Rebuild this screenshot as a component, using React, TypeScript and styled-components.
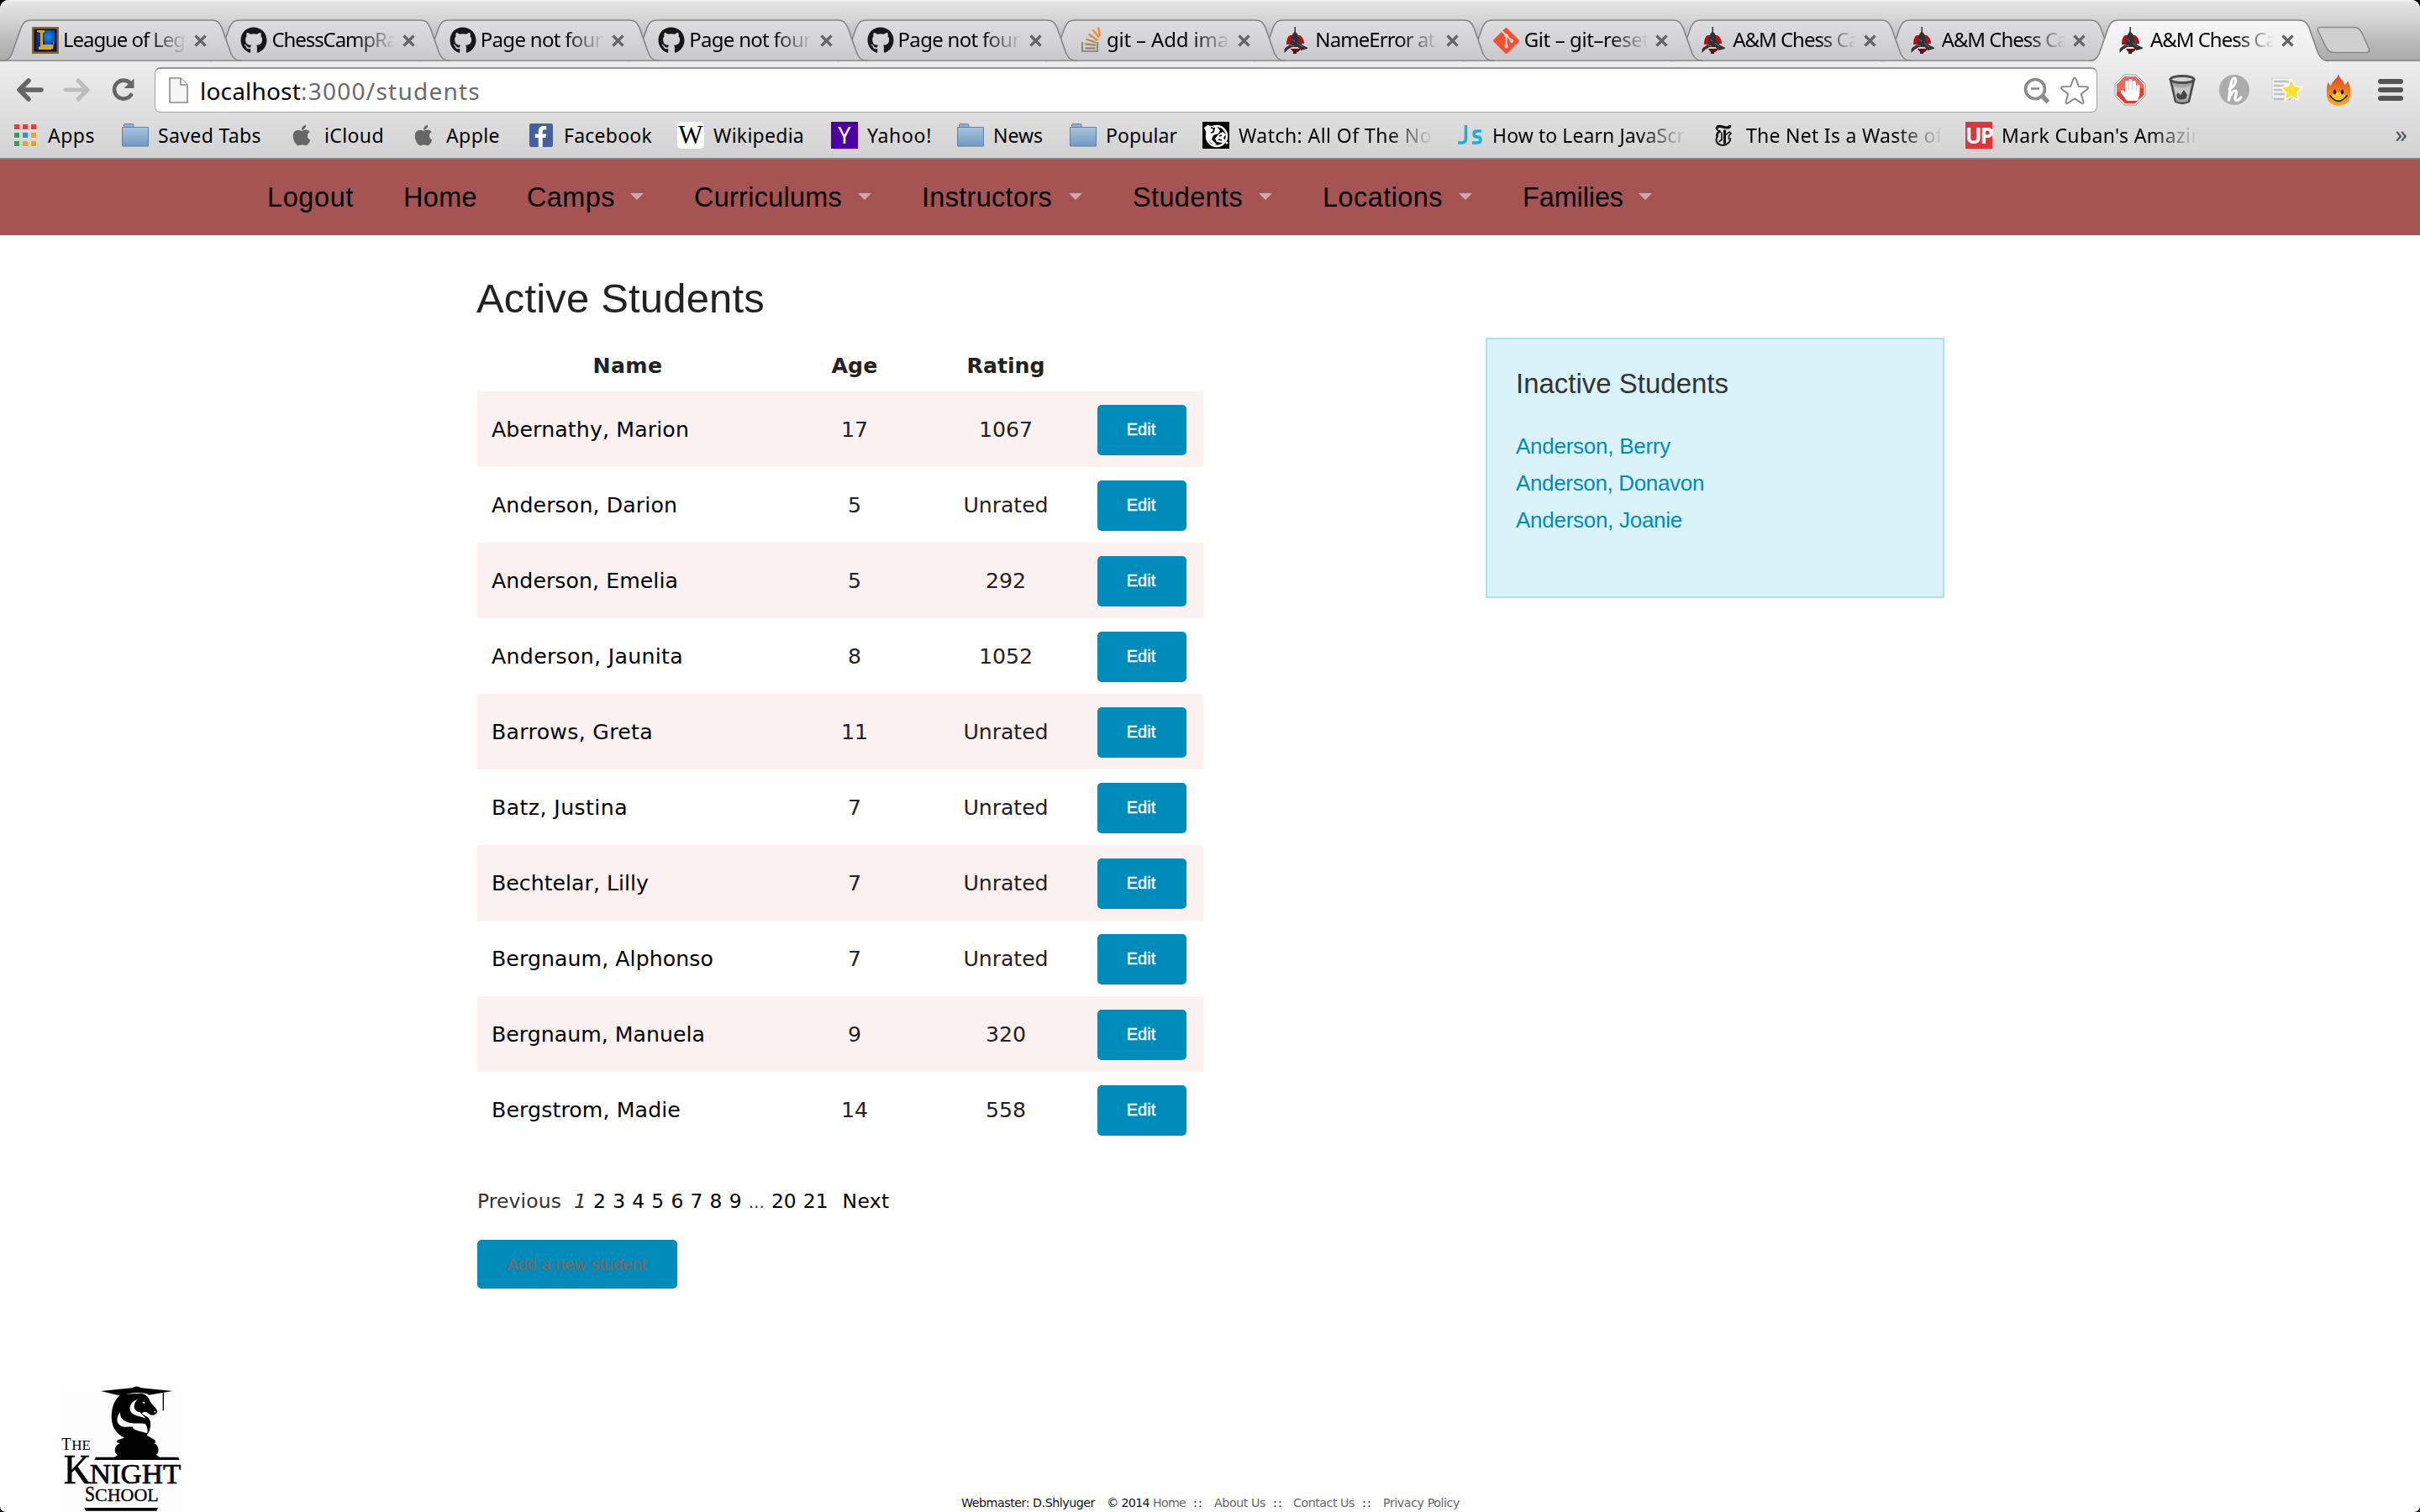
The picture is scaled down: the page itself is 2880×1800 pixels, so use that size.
import React, { useLayoutEffect, useRef, useState } from "react";
import styled, { createGlobalStyle } from "styled-components";
import { FaApple, FaFacebookF, FaGithub, FaGitAlt, FaHandPaper } from "react-icons/fa";

const chromeFont = `"Lucida Grande", "Noto Sans", sans-serif`;
const verdana = `"DejaVu Sans", Verdana, sans-serif`;
const helvetica = `"Liberation Sans", Helvetica, Arial, sans-serif`;

const GlobalStyle = createGlobalStyle`
  * { box-sizing: border-box; }
  html, body { margin: 0; padding: 0; background: #000; }
  a { color: inherit; text-decoration: none; }
  svg { display: block; flex: none; }
`;

const Window = styled.div`
  width: 2880px;
  height: 1800px;
  display: flex;
  flex-direction: column;
  overflow: hidden;
  background: #fff;
  border-radius: 10px 10px 7px 7px;
  font-family: ${verdana};
`;

/* ---------- text tracked to a set measure ---------- */

const Tracked = styled.span`
  display: inline-block;
  white-space: pre;
  flex: none;
`;

function Track({ children, width }: { children: string; width: number }) {
  const ref = useRef<HTMLSpanElement>(null);
  const [spacing, setSpacing] = useState(0);
  useLayoutEffect(() => {
    const el = ref.current;
    if (!el) return;
    el.style.letterSpacing = "0px";
    const natural = el.getBoundingClientRect().width;
    const next = (width - natural) / children.length;
    el.style.letterSpacing = `${next}px`;
    setSpacing(next);
  }, [children, width]);
  return (
    <Tracked ref={ref} style={{ letterSpacing: spacing }}>
      {children}
    </Tracked>
  );
}

/* ---------- tab strip ---------- */

const TabStrip = styled.div`
  height: 73px;
  flex: none;
  display: flex;
  align-items: flex-end;
  padding-left: 8px;
  background: linear-gradient(#f4f4f4 0, #e4e4e4 3px, #d2d2d2 26px, #b9b9b9 50px, #ababab 100%);
  box-shadow: inset 0 -2px 0 #8d8d8d;
`;

const TabBox = styled.div<{ $order: number }>`
  position: relative;
  z-index: ${(p) => p.$order};
  width: 248.4px;
  height: 50px;
  flex: none;
  display: flex;
  align-items: center;
  padding: 0 0 0 30px;
`;

const TabShape = styled.svg`
  position: absolute;
  left: -6px;
  top: 0;
  z-index: -1;
`;

const TabTitle = styled.div`
  width: 146px;
  height: 34px;
  margin: -3px 0 0 5px;
  overflow: hidden;
  font: 24px/34px ${chromeFont};
  color: #000;
  -webkit-mask-image: linear-gradient(90deg, #000 68%, transparent 101%);
  mask-image: linear-gradient(90deg, #000 68%, transparent 101%);
`;

const CloseMark = styled.svg`
  margin-left: 10px;
`;

const NewTab = styled.svg`
  margin: 0 0 8px 17px;
`;

/* ---------- toolbar ---------- */

const ChromeBody = styled.div`
  height: 117px;
  flex: none;
  display: flex;
  flex-direction: column;
  background: linear-gradient(#ededed, #e0e0e0 50%, #d2d2d2);
  border-bottom: 2px solid #808080;
`;

const Toolbar = styled.div`
  height: 68px;
  display: flex;
  align-items: center;
  padding-left: 19px;
`;

const NavButtons = styled.div`
  width: 165px;
  display: flex;
  align-items: center;
  gap: 23px;
`;

const AddressField = styled.div`
  width: 2312px;
  height: 54px;
  display: flex;
  align-items: center;
  padding: 0 8px 0 16px;
  background: #fff;
  border: 1px solid #a2a2a2;
  border-top: 2px solid #949494;
  border-radius: 7px;
`;

const Url = styled.div`
  flex: 1;
  margin-left: 14px;
  font: 28px/40px ${chromeFont};
  color: #6a6a6a;
`;

const Host = styled.span`
  color: #000;
`;

const FieldIcons = styled.div`
  display: flex;
  align-items: center;
  gap: 11px;
`;

const Extensions = styled.div`
  margin-left: 8px;
  display: grid;
  grid-template-columns: repeat(6, 62px);
  align-items: center;
  justify-items: center;
`;

/* ---------- bookmarks ---------- */

const BookmarkBar = styled.div`
  height: 40px;
  display: flex;
  align-items: center;
  padding-left: 14px;
`;

const BookmarkItem = styled.div<{ $width: number }>`
  width: ${(p) => p.$width}px;
  flex: none;
  display: flex;
  align-items: center;
`;

const IconSlot = styled.span`
  width: 32px;
  height: 34px;
  flex: none;
  display: flex;
  align-items: center;
  justify-content: center;
`;

const BookmarkText = styled.span<{ $fade?: boolean }>`
  margin-left: 11px;
  font: 23px/34px ${chromeFont};
  color: #000;
  overflow: hidden;
  ${(p) =>
    p.$fade &&
    `max-width: 232px;
     -webkit-mask-image: linear-gradient(90deg, #000 76%, transparent 101%);
     mask-image: linear-gradient(90deg, #000 76%, transparent 101%);`}
`;

const Glyph = styled.span<{ $bg: string; $color: string; $size: number; $family: string; $radius?: number; $bold?: boolean }>`
  width: 32px;
  height: 32px;
  display: flex;
  align-items: center;
  justify-content: center;
  border-radius: ${(p) => p.$radius ?? 0}px;
  background: ${(p) => p.$bg};
  color: ${(p) => p.$color};
  font: ${(p) => (p.$bold ? 700 : 400)} ${(p) => p.$size}px/32px ${(p) => p.$family};
  letter-spacing: ${(p) => (p.$bold ? "-2px" : "0")};
`;

const FacebookTile = styled.span`
  width: 28px;
  height: 28px;
  display: flex;
  align-items: flex-end;
  justify-content: flex-end;
  padding-right: 2px;
  background: #45619d;
  color: #fff;
  border-radius: 2px;
`;

const AppsGrid = styled.span`
  display: grid;
  grid-template-columns: repeat(3, 6px);
  gap: 4px;
`;

const AppsDot = styled.span<{ $color: string }>`
  height: 6px;
  background: ${(p) => p.$color};
  box-shadow: 0 1px 0 #fff8;
`;

const More = styled.span`
  margin-left: auto;
  padding: 0 15px 5px 0;
  font: 29px/30px ${chromeFont};
  color: #555;
`;

/* ---------- page ---------- */

const SiteNav = styled.nav`
  height: 90px;
  flex: none;
  display: flex;
  align-items: center;
  padding-left: 318px;
  background: #a55353;
  color: #000;
  font: 32.4px/45px ${helvetica};
`;

const NavItem = styled.a<{ $width: number }>`
  width: ${(p) => p.$width}px;
  flex: none;
  display: flex;
  align-items: center;
  justify-content: space-between;
  padding-right: 60px;
`;

const Caret = styled.span`
  margin-bottom: 2px;
  border: 8px solid transparent;
  border-top-color: #d2a9a9;
  border-bottom: 0;
`;

const Main = styled.main`
  flex: 1;
  display: flex;
  align-items: flex-start;
  padding: 40px 0 0 568px;
`;

const Roster = styled.section`
  width: 864px;
`;

const Title = styled.h2`
  height: 70px;
  margin: 0 0 14px -1px;
  font: 400 49px/70px ${helvetica};
  color: #222;
`;

const Grid = styled.div`
  display: flex;
  flex-direction: column;
  font-size: 25.2px;
  color: #222;
`;

const Row = styled.div<{ $shaded?: boolean; $head?: boolean }>`
  height: ${(p) => (p.$head ? 62 : 90)}px;
  display: grid;
  grid-template-columns: 358px 182px 178px 1fr;
  align-items: center;
  text-align: center;
  font-weight: ${(p) => (p.$head ? 700 : 400)};
  background: ${(p) => (p.$shaded ? "#faf1f0" : "#fff")};
`;

const NameCell = styled.a`
  padding-left: 17px;
  text-align: left;
  color: #000;
`;

const Button = styled.button<{ $wide?: boolean }>`
  width: ${(p) => (p.$wide ? 238 : 106)}px;
  height: ${(p) => (p.$wide ? 58 : 60)}px;
  margin: ${(p) => (p.$wide ? "26px 0 0" : "2px 0 0 20px")};
  padding: ${(p) => (p.$wide ? "0 2px 0 0" : "0 2px 2px 0")};
  border: 0;
  border-radius: 5px;
  background: #008cba;
  color: ${(p) => (p.$wide ? "#716b6c" : "#fff")};
  font: 20px/28px ${helvetica};
  -webkit-text-stroke: ${(p) => (p.$wide ? "0.4px #716b6c" : "0.4px #fff")};
`;

const Pager = styled.div`
  height: 40px;
  margin-top: 44px;
  display: flex;
  align-items: center;
  font-size: 23.4px;
  line-height: 40px;
  color: #333;
`;

const PageList = styled.span`
  margin: 0 17px 0 15px;
  display: flex;
  gap: 8.2px;
  color: #000;
`;

const Current = styled.em`
  color: #333;
`;

const Dots = styled.span`
  display: inline-block;
  font-size: 19px;
  color: #333;
`;

const Panel = styled.aside`
  width: 546px;
  height: 310px;
  margin: 82px 0 0 336px;
  padding: 31px 34px;
  background: #daf2fa;
  border: 2px solid #a9e3f2;
  font-family: ${helvetica};
  color: #008cba;
  font-size: 26px;
  line-height: 44px;
  display: flex;
  flex-direction: column;
  align-items: flex-start;
`;

const PanelTitle = styled.h5`
  margin: 0 0 30px;
  font: 400 33px/44px ${helvetica};
  color: #333;
`;

const Footer = styled.footer`
  height: 150px;
  flex: none;
  display: flex;
  align-items: flex-end;
  padding-left: 72px;
`;

const FooterText = styled.div`
  margin-left: 928px;
  height: 23px;
  display: flex;
  font-size: 14.2px;
  line-height: 24px;
  color: #000;
`;

const FootPart = styled.span<{ $gap: number; $muted?: boolean }>`
  margin-right: ${(p) => p.$gap}px;
  color: ${(p) => (p.$muted ? "#666" : "#111")};
`;

/* ---------- icons ---------- */

const LeagueIcon = () => (
  <svg width="32" height="32" viewBox="0 0 32 32">
    <defs>
      <radialGradient id="lol" cx=".65" cy=".35" r=".6">
        <stop offset="0" stopColor="#1a8be6" />
        <stop offset="1" stopColor="#062a8c" />
      </radialGradient>
    </defs>
    <rect width="32" height="32" fill="#8a6326" />
    <rect x="2.5" y="2.5" width="27" height="27" fill="#071238" />
    <rect x="5" y="4" width="22" height="23" fill="url(#lol)" />
    <path d="M6 4h9v2l-2 1v14h9l4-4-1 9-3 1H8v-3l2-1V7L6 6z" fill="#d9a531" />
    <path d="M13 7v14h9l3-3v3H15z" fill="#06104a" />
  </svg>
);

const OverflowIcon = () => (
  <svg width="32" height="32" viewBox="0 0 32 32" fill="none">
    <path d="M8 18v11h18V18" stroke="#8b8c8e" strokeWidth="2.2" />
    <path d="M11.500 25.500h12" stroke="#8f8878" strokeWidth="2.400" />
    <path d="M11.500 20.300l12.500 1.600" stroke="#a48a60" strokeWidth="2.400" />
    <path d="M12.500 14.600l12 4" stroke="#b98f4e" strokeWidth="2.400" />
    <path d="M15.500 8.500l10.500 7.500" stroke="#cf9440" strokeWidth="2.400" />
    <path d="M20.500 3.500l7.500 9" stroke="#ee8f3d" strokeWidth="2.600" />
    <path d="M27 .5l2 10.500" stroke="#f98b3a" strokeWidth="2.600" />
  </svg>
);

const KnightFavicon = () => (
  <svg width="32" height="32" viewBox="0 0 32 32">
    <path d="M12.500 0h1.500v8l3 3h-8l3.500-3z" fill="#333" />
    <path d="M7 10h4l2 3v8H3c0-5 1-9 4-11z" fill="#b11218" />
    <path d="M16 10h3c3 2 5 5 5 10h-9v-8z" fill="#b11218" />
    <path d="M10 9l3-4 3.500 4 1 8 5 5 6 3-1 1-7 2-4-4h-7l-5 3-4 4v-4l1-2 6-4z" fill="#303236" />
    <path d="M8 26h12l-2 3-4 2-4-2z" fill="#7c0b10" />
    <path d="M6 21l6 2M16 19l6 5M10 15l3 2" stroke="#777" strokeWidth="1" />
    <path d="M11 28h4v4h-4z" fill="#3a2024" />
  </svg>
);

const Arrow = ({ muted, flip }: { muted?: boolean; flip?: boolean }) => (
  <svg width="33" height="30" viewBox="0 0 33 30" fill="none" transform={flip ? "scale(-1 1)" : undefined}>
    <path d="M15 4L4 15l11 11M5 15h25" stroke={muted ? "#bdbdbd" : "#656565"} strokeWidth={muted ? 5 : 5.500} strokeLinecap="round" strokeLinejoin="round" />
  </svg>
);

const Reload = () => (
  <svg width="30" height="30" viewBox="0 0 30 30">
    <path d="M24 7A11 11 0 1 0 25 21" fill="none" stroke="#656565" strokeWidth="4.600" strokeLinecap="round" />
    <path d="M28.500 1.500v11.500h-12z" fill="#656565" />
  </svg>
);

const PageIcon = () => (
  <svg width="23" height="31" viewBox="0 0 23 31">
    <path d="M1 1h13l8 8v21H1z" fill="#f6f6f6" stroke="#8a8a8a" strokeWidth="1.600" />
    <path d="M14 1v8h8" fill="#fff" stroke="#8a8a8a" strokeWidth="1.600" />
  </svg>
);

const ZoomOutIcon = () => (
  <svg width="32" height="32" viewBox="0 0 32 32" fill="none" stroke="#8c8c8c">
    <circle cx="14" cy="14" r="11.500" strokeWidth="3.600" />
    <path d="M9 13.500h10" strokeWidth="2.600" />
    <path d="M22.500 22.500l7 7" strokeWidth="5.500" />
  </svg>
);

const StarIcon = () => (
  <svg width="36" height="36" viewBox="0 0 36 36">
    <path d="M18 2.500c1 0 1.400 1 1.800 2.200l3 8.200 9.400.4c2 .2 2.400 1.600 1 2.800l-7.400 5.700 2.600 9.200c.4 2-.8 2.800-2.400 1.700L18 27.500l-8 5.200c-1.600 1.100-2.800.3-2.400-1.700l2.600-9.200-7.400-5.700c-1.400-1.200-1-2.600 1-2.800l9.400-.4 3-8.200c.4-1.200.8-2.200 1.800-2.200z" fill="#fff" stroke="#8a8a8a" strokeWidth="2" />
  </svg>
);

const StopHand = () => (
  <svg width="38" height="38" viewBox="0 0 38 38">
    <path d="M12 1h14l11 11v14L26 37H12L1 26V12z" fill="#fff" stroke="#999" strokeWidth="1" />
    <path d="M12.800 3h12.400L35 12.800v12.400L25.200 35H12.800L3 25.200V12.800z" fill="#e9382f" />
    <path d="M12.800 3h12.400L35 12.800V17Q19 15 3 22v-9.200z" fill="#f2655c" />
    <FaHandPaper x="6" y="6" size={26} color="#fff" />
  </svg>
);

const Bucket = () => (
  <svg width="34" height="38" viewBox="0 0 34 38">
    <path d="M3 7l6 26q8 4 16 0l6-26z" fill="#a4a4a4" stroke="#4b4b4b" strokeWidth="2.500" />
    <ellipse cx="17" cy="6.500" rx="14" ry="4" fill="#d6d6d6" stroke="#4d4d4d" strokeWidth="3" />
    <path d="M7 14q10 5 20 0l-3 15q-7 3-14 0z" fill="#c6c6c6" />
    <path d="M10 25l2-3 3 3 4-6 4 6-1 4q-6 3-11 0z" fill="#474747" />
  </svg>
);

const HoneyIcon = () => (
  <svg width="38" height="38" viewBox="0 0 38 38" fill="none">
    <circle cx="19" cy="19" r="18" fill="#acacac" />
    <path d="M13 18c7-3 10-12 6-13-4 0-5 12-6.500 26 2-8 6-12 8.500-10.500S18 29 20.500 31c2.500 1 5-1 6.500-3" stroke="#fff" strokeWidth="3.200" strokeLinecap="round" strokeLinejoin="round" />
  </svg>
);

const StarList = () => (
  <svg width="40" height="36" viewBox="0 0 40 36">
    <path d="M3 4h24v24H3z" fill="#f3f3f3" stroke="#d0d0d0" />
    <path d="M5 8h18M5 13h12M5 18h12M5 23h14M5 29h20" stroke="#c0c0c0" strokeWidth="2.400" />
    <path d="M26 5l4 8.500 9 1.500-6.500 6 2 9.500-8.500-5-8 5 1.500-9.500L13 15l9-1.500z" fill="#fbe02c" stroke="#fff" strokeWidth="1.500" />
  </svg>
);

const Flame = () => (
  <svg width="30" height="38" viewBox="0 0 30 38">
    <defs>
      <linearGradient id="fl" x1="0" y1="0" x2="0" y2="1">
        <stop offset="0" stopColor="#d9401b" />
        <stop offset=".5" stopColor="#ef7a1f" />
        <stop offset="1" stopColor="#fba51d" />
      </linearGradient>
    </defs>
    <path d="M15 0c1 6 6 7 7 13 2-1 4-3 4-5 4 8 3 12 3 17 0 8-6 12.500-14 12.500S1 33 1 25C1 20 0 16 3 9c0 2 1 4 3 5C7 8 14 6 15 0z" fill="url(#fl)" />
    <ellipse cx="15" cy="28" rx="9" ry="6" fill="#ffd52e" opacity=".8" />
    <ellipse cx="10.500" cy="21.500" rx="1.700" ry="3" fill="#222" />
    <ellipse cx="19.500" cy="21.500" rx="1.700" ry="3" fill="#222" />
    <path d="M5 26q10 13 20 0" fill="none" stroke="#222" strokeWidth="1.800" strokeLinecap="round" />
  </svg>
);

const MenuIcon = () => (
  <svg width="30" height="28" viewBox="0 0 30 28" fill="#555">
    <rect y="1" width="30" height="6" rx="3" />
    <rect y="11" width="30" height="6" rx="3" />
    <rect y="21" width="30" height="6" rx="3" />
  </svg>
);

const Folder = () => (
  <svg width="32" height="28" viewBox="0 0 32 28">
    <defs>
      <linearGradient id="fo" x1="0" y1="0" x2="0" y2="1">
        <stop offset="0" stopColor="#a9c4de" />
        <stop offset="1" stopColor="#7199c2" />
      </linearGradient>
    </defs>
    <path d="M2.500 5V2q0-1.500 1.500-1.500h8.500Q14 .5 14 2v3z" fill="#8fb0d2" stroke="#6385ab" />
    <path d="M.5 4.500h31v22.500H.5z" fill="url(#fo)" stroke="#5f83aa" />
  </svg>
);

const WatchIcon = () => (
  <svg width="32" height="32" viewBox="0 0 32 32">
    <rect width="32" height="32" fill="#000" />
    <circle cx="17" cy="17" r="12" fill="none" stroke="#fff" strokeWidth="2.500" />
    <path d="M2 7l4-3 5 1 6 1 4 4-2 4-6 2-2 5 6 6-3 1-8-7-1-7z" fill="#fff" />
    <path d="M19 15l5-3 4 3-3 4 3 5-5 1-6-1-2-4z" fill="#fff" />
    <path d="M10 7l4 1-1 4-3 1M20 17l3-1M19 21l4 1" stroke="#000" strokeWidth="1.800" fill="none" />
    <circle cx="29" cy="25" r="1.500" fill="#fff" />
  </svg>
);

const JsIcon = () => (
  <svg width="32" height="32" viewBox="0 0 32 32" fill="none" stroke="#13b2d6" strokeWidth="3.500">
    <path d="M11.500 4v16q0 5-5 5H2" />
    <path d="M30 11h-5q-4 0-4 3.500t4 3.500 4 3.500-4 3.500h-6" />
  </svg>
);

const TimesIcon = () => (
  <svg width="20" height="27" viewBox="0 0 20 27" fill="none" stroke="#111">
    <path d="M2 5.500C2.500 1.500 6 2 10 3.200s7.500 1.300 7.800-2.200" strokeWidth="3.200" />
    <path d="M2 5c0 2 2 3.200 4 2.500" strokeWidth="1.600" />
    <path d="M7 8.500C3 9 1.500 12 3 14.500" strokeWidth="2.600" />
    <path d="M3.500 14C1 16 .8 20 3 22.500c3 3.500 10 3.500 14-1.500 1-1.500 1.500-3 1.200-4.500" strokeWidth="2" />
    <path d="M11.500 6.500v17" strokeWidth="3" />
    <path d="M8 9.500v9l-3.500 2.200M13 12.500l4-3.500 2 2-2.500 2.500v4.500" strokeWidth="1.600" />
  </svg>
);

const SchoolLogo = () => (
  <svg width="144" height="150" viewBox="96 90 432 450" fontFamily="'Liberation Serif', serif" fill="#000">
    <rect x="96" y="90" width="432" height="450" fill="#fdfdfd" />
    <path d="M240 108L352 97q16-11 32 0l112 11-84 14q-8-8-40-8-32 0-58 12z" />
    <path d="M463 110v68" stroke="#000" strokeWidth="4" />
    <path d="M314 120C276 140 268 215 292 248c8 12 18 18 32 27l-24 8-4 8 12 4c-22 8-22 34-8 42l-12 8h162l-12-9c12-10 10-35-8-41l6-4-4-9-28-16c14-16 20-50 4-64l-22-14c4-6 10-6 18-4 8 4 12 12 20 10 8 0 14-4 18-12-2-16-22-22-30-46-8-16-20-18-30-20z" />
    <path d="M372 138c-26 6-36 32-22 48 12 12 34 12 50 20-4-8-14-14-20-22-16-2-24-14-20-28 2-10 6-12 12-18z" fill="#fff" />
    <path d="M309 184c-14 16-16 40 4 49 14 6 28 1 42 3-6 8 20 14 51 23 2-14 0-26-8-34-22-4-46 2-66-7-18-8-24-20-23-34z" fill="#fff" />
    <path d="M388 146l9 1-1 7-6-3z" fill="#fff" />
    <circle cx="433" cy="182" r="2.500" fill="#fff" />
    <path d="M222 344h294l5 10H217z" />
    <path d="M181 525h263l-5 11H186z" />
    <text x="100" y="318" fontSize="60" textLength="34" lengthAdjust="spacingAndGlyphs">T</text>
    <text x="136" y="318" fontSize="52" textLength="68" lengthAdjust="spacingAndGlyphs">HE</text>
    <text x="107" y="437" fontSize="154" textLength="98" lengthAdjust="spacingAndGlyphs" stroke="#000" strokeWidth="2">K</text>
    <text x="200" y="437" fontSize="102" textLength="326" lengthAdjust="spacingAndGlyphs" stroke="#000" strokeWidth="2">NIGHT</text>
    <text x="183" y="502" fontSize="74" textLength="36" lengthAdjust="spacingAndGlyphs" stroke="#000" strokeWidth="1">S</text>
    <text x="219" y="502" fontSize="64" textLength="227" lengthAdjust="spacingAndGlyphs" stroke="#000" strokeWidth="1">CHOOL</text>
  </svg>
);

/* ---------- data ---------- */

const github = <FaGithub size={32} color="#181616" />;
const tabs: { icon: React.ReactNode; title: string; width: number }[] = [
  { icon: <LeagueIcon />, title: "League of Leg", width: 145 },
  { icon: github, title: "ChessCampRa", width: 149 },
  { icon: github, title: "Page not foun", width: 150 },
  { icon: github, title: "Page not foun", width: 150 },
  { icon: github, title: "Page not foun", width: 150 },
  { icon: <OverflowIcon />, title: "git – Add ima", width: 145 },
  { icon: <KnightFavicon />, title: "NameError at", width: 142 },
  { icon: <FaGitAlt size={35} color="#f4502f" />, title: "Git – git–reset", width: 149 },
  { icon: <KnightFavicon />, title: "A&M Chess Ca", width: 150 },
  { icon: <KnightFavicon />, title: "A&M Chess Ca", width: 150 },
  { icon: <KnightFavicon />, title: "A&M Chess Ca", width: 150 },
];

const dots = ["#f4373c", "#f4373c", "#f4373c", "#349d58", "#2d8cf0", "#f0a02a", "#349d58", "#f0a02a", "#f0a02a"];

const appleIcon = <FaApple size={28} color="#666" />;
const bookmarks: { icon: React.ReactNode; label: string; width: number; text: number; fade?: boolean }[] = [
  {
    icon: (
      <AppsGrid>
        {dots.map((c, i) => (
          <AppsDot key={i} $color={c} />
        ))}
      </AppsGrid>
    ),
    label: "Apps",
    width: 131,
    text: 56,
  },
  { icon: <Folder />, label: "Saved Tabs", width: 198, text: 123 },
  { icon: appleIcon, label: "iCloud", width: 145, text: 71 },
  { icon: appleIcon, label: "Apple", width: 140, text: 64 },
  {
    icon: (
      <FacebookTile>
        <FaFacebookF size={25} />
      </FacebookTile>
    ),
    label: "Facebook",
    width: 178,
    text: 105,
  },
  { icon: <Glyph $bg="#fff" $color="#000" $size={31} $family="'Liberation Serif', serif" $radius={5}>W</Glyph>, label: "Wikipedia", width: 183, text: 108 },
  { icon: <Glyph $bg="#4a00a5" $color="#fff" $size={27} $family={chromeFont}>Y</Glyph>, label: "Yahoo!", width: 150, text: 77 },
  { icon: <Folder />, label: "News", width: 134, text: 59 },
  { icon: <Folder />, label: "Popular", width: 158, text: 85 },
  { icon: <WatchIcon />, label: "Watch: All Of The No", width: 302, text: 230, fade: true },
  { icon: <JsIcon />, label: "How to Learn JavaScr", width: 302, text: 229, fade: true },
  { icon: <TimesIcon />, label: "The Net Is a Waste of", width: 304, text: 234, fade: true },
  { icon: <Glyph $bg="#e0343a" $color="#fff" $size={26} $family={chromeFont} $bold>UP</Glyph>, label: "Mark Cuban's Amazin", width: 303, text: 240, fade: true },
];

const navItems: { label: string; width: number; text: number; menu?: boolean }[] = [
  { label: "Logout", width: 162, text: 103 },
  { label: "Home", width: 147, text: 88 },
  { label: "Camps", width: 199, text: 105, menu: true },
  { label: "Curriculums", width: 271, text: 176, menu: true },
  { label: "Instructors", width: 251, text: 155, menu: true },
  { label: "Students", width: 226, text: 131, menu: true },
  { label: "Locations", width: 238, text: 143, menu: true },
  { label: "Families", width: 214, text: 120, menu: true },
];

const students: [string, string, string, number][] = [
  ["Abernathy, Marion", "17", "1067", 235],
  ["Anderson, Darion", "5", "Unrated", 221],
  ["Anderson, Emelia", "5", "292", 222],
  ["Anderson, Jaunita", "8", "1052", 228],
  ["Barrows, Greta", "11", "Unrated", 192],
  ["Batz, Justina", "7", "Unrated", 162],
  ["Bechtelar, Lilly", "7", "Unrated", 187],
  ["Bergnaum, Alphonso", "7", "Unrated", 264],
  ["Bergnaum, Manuela", "9", "320", 254],
  ["Bergstrom, Madie", "14", "558", 225],
];

const inactive: [string, number][] = [
  ["Anderson, Berry", 184],
  ["Anderson, Donavon", 224],
  ["Anderson, Joanie", 198],
];

const pages = ["2", "3", "4", "5", "6", "7", "8", "9", "…", "20", "21"];

const footer: [string, number, number, boolean?][] = [
  ["Webmaster: D.Shlyuger", 159, 14],
  ["© 2014", 51, 4],
  ["Home", 39, 9, true],
  ["::", 12, 13],
  ["About Us", 61, 9, true],
  ["::", 12, 12],
  ["Contact Us", 73, 9, true],
  ["::", 12, 13],
  ["Privacy Policy", 91, 0, true],
];

/* ---------- views ---------- */

const tabPath = "M0 49.500c6 0 9-2 12-8L23 10c3-7 6-9 12-9h215c6 0 9 2 12 9l11 31c3 6 6 8.500 12 8.500";

function Tab({ icon, title, width, active, order }: { icon: React.ReactNode; title: string; width: number; active: boolean; order: number }) {
  const id = active ? "tabOn" : "tabOff";
  return (
    <TabBox $order={order}>
      <TabShape width="286" height="51" viewBox="0 0 286 51">
        <defs>
          <linearGradient id={id} x1="0" y1="0" x2="0" y2="1">
            <stop offset="0" stopColor={active ? "#f5f5f5" : "#dedee0"} />
            <stop offset="1" stopColor={active ? "#ededed" : "#c9c9cb"} />
          </linearGradient>
        </defs>
        <path d={active ? `${tabPath}V51H0z` : `${tabPath}z`} fill={`url(#${id})`} />
        <path d={tabPath} fill="none" stroke="#858585" strokeWidth="1.600" />
        {!active && <path d="M0 49.300h286" stroke="#8d8d8d" strokeWidth="1.600" />}
      </TabShape>
      <IconSlot>{icon}</IconSlot>
      <TabTitle>
        <Track width={width}>{title}</Track>
      </TabTitle>
      <CloseMark width="15" height="15" viewBox="0 0 15 15">
        <path d="M1.500 1.500l12 12M13.500 1.500l-12 12" stroke="#666" strokeWidth="3.200" />
      </CloseMark>
    </TabBox>
  );
}

export default function App() {
  return (
    <>
      <GlobalStyle />
      <Window>
        <TabStrip>
          {tabs.map((t, i) => (
            <Tab key={i} {...t} active={i === tabs.length - 1} order={i === tabs.length - 1 ? 20 : 11 - i} />
          ))}
          <NewTab width="66" height="34" viewBox="0 0 66 34">
            <path d="M4 1.500h40q7 0 10 7l8 18q2 5-3 5H21q-7 0-10-7L2 6.500Q0 1.500 4 1.500z" fill="#d0d0d0" stroke="#8a8a8a" strokeWidth="1.600" />
          </NewTab>
        </TabStrip>
        <ChromeBody>
          <Toolbar>
            <NavButtons>
              <Arrow />
              <Arrow muted flip />
              <Reload />
            </NavButtons>
            <AddressField>
              <PageIcon />
              <Url>
                <Host>
                  <Track width={120}>localhost</Track>
                </Host>
                <Track width={214}>:3000/students</Track>
              </Url>
              <FieldIcons>
                <ZoomOutIcon />
                <StarIcon />
              </FieldIcons>
            </AddressField>
            <Extensions>
              <StopHand />
              <Bucket />
              <HoneyIcon />
              <StarList />
              <Flame />
              <MenuIcon />
            </Extensions>
          </Toolbar>
          <BookmarkBar>
            {bookmarks.map((b) => (
              <BookmarkItem key={b.label} $width={b.width}>
                <IconSlot>{b.icon}</IconSlot>
                <BookmarkText $fade={b.fade}>
                  <Track width={b.text}>{b.label}</Track>
                </BookmarkText>
              </BookmarkItem>
            ))}
            <More>»</More>
          </BookmarkBar>
        </ChromeBody>
        <SiteNav>
          {navItems.map((n) => (
            <NavItem key={n.label} $width={n.width}>
              <Track width={n.text}>{n.label}</Track>
              {n.menu && <Caret />}
            </NavItem>
          ))}
        </SiteNav>
        <Main>
          <Roster>
            <Title>
              <Track width={343}>Active Students</Track>
            </Title>
            <Grid>
              <Row $head>
                <span><Track width={83}>Name</Track></span>
                <span><Track width={55}>Age</Track></span>
                <span><Track width={93}>Rating</Track></span>
              </Row>
              {students.map(([name, age, rating, width], i) => (
                <Row key={name} $shaded={i % 2 === 0}>
                  <NameCell><Track width={width}>{name}</Track></NameCell>
                  <span>{age}</span>
                  <span>{rating === "Unrated" ? <Track width={101}>{rating}</Track> : rating}</span>
                  <Button>Edit</Button>
                </Row>
              ))}
            </Grid>
            <Pager>
              <Track width={100}>Previous</Track>
              <PageList>
                <Current>1</Current>
                {pages.map((p) => (
                  <a key={p}>{p === "…" ? <Dots>…</Dots> : p}</a>
                ))}
              </PageList>
              <Host><Track width={56}>Next</Track></Host>
            </Pager>
            <Button $wide>Add a new student</Button>
          </Roster>
          <Panel>
            <PanelTitle><Track width={253}>Inactive Students</Track></PanelTitle>
            {inactive.map(([name, width]) => (
              <a key={name}><Track width={width}>{name}</Track></a>
            ))}
          </Panel>
        </Main>
        <Footer>
          <SchoolLogo />
          <FooterText>
            {footer.map(([text, width, gap, muted], i) => (
              <FootPart key={i} $gap={gap} $muted={muted}>
                <Track width={width}>{text}</Track>
              </FootPart>
            ))}
          </FooterText>
        </Footer>
      </Window>
    </>
  );
}
